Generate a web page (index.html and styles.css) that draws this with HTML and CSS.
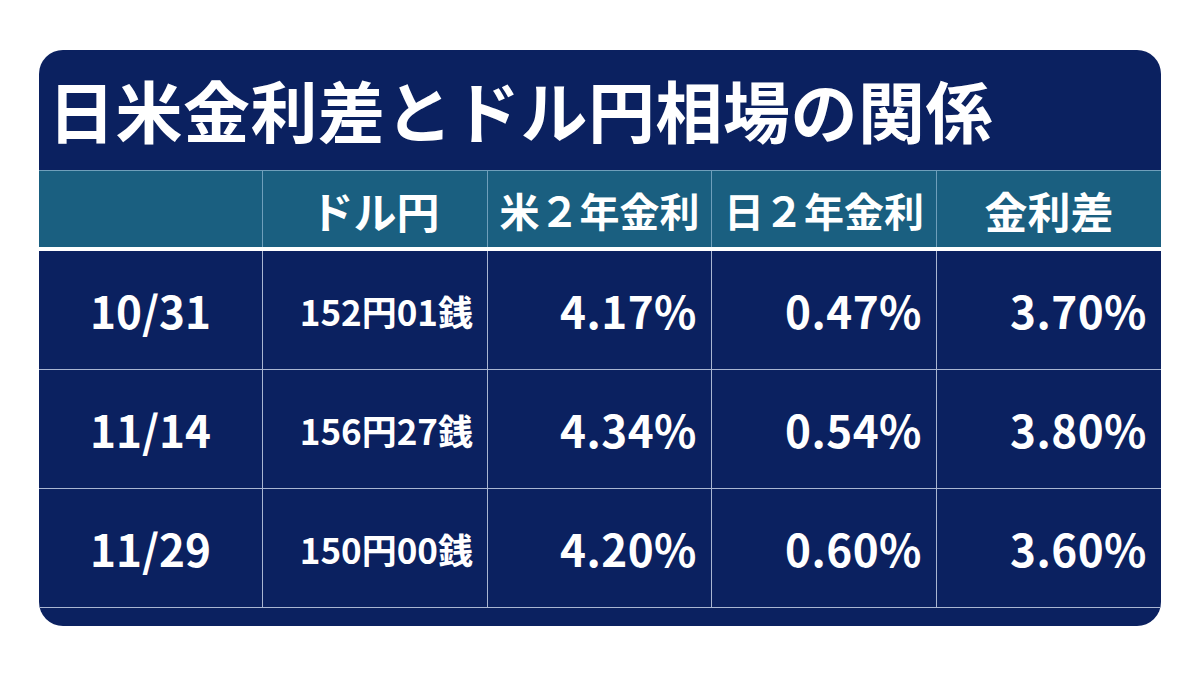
FILE: index.html
```html
<!DOCTYPE html>
<html lang="ja">
<head>
<meta charset="utf-8">
<title>日米金利差とドル円相場の関係</title>
<link rel="stylesheet" href="styles.css">
</head>
<body>
<div class="card">
  <h1 class="title">日米金利差とドル円相場の関係</h1>
  <div class="table">
    <div class="row head">
      <div class="cell"></div>
      <div class="cell wide">ドル円</div>
      <div class="cell">米２年金利</div>
      <div class="cell">日２年金利</div>
      <div class="cell wide">金利差</div>
    </div>
    <div class="sep"></div>
    <div class="row body">
      <div class="cell date">10/31</div>
      <div class="cell yen">152円01銭</div>
      <div class="cell pct">4.17%</div>
      <div class="cell pct">0.47%</div>
      <div class="cell pct">3.70%</div>
    </div>
    <div class="row body">
      <div class="cell date">11/14</div>
      <div class="cell yen">156円27銭</div>
      <div class="cell pct">4.34%</div>
      <div class="cell pct">0.54%</div>
      <div class="cell pct">3.80%</div>
    </div>
    <div class="row body">
      <div class="cell date">11/29</div>
      <div class="cell yen">150円00銭</div>
      <div class="cell pct">4.20%</div>
      <div class="cell pct">0.60%</div>
      <div class="cell pct">3.60%</div>
    </div>
  </div>
</div>
</body>
</html>
```
FILE: styles.css
```css
html, body {
  margin: 0;
  padding: 0;
  background: #ffffff;
}
body {
  width: 1200px;
  height: 675px;
  overflow: hidden;
  font-family: "Noto Sans CJK JP", "Noto Sans", sans-serif;
  color: #ffffff;
}
.card {
  margin: 50px 0 0 39px;
  width: 1122px;
  height: 576px;
  background: #0b2160;
  border-radius: 24px;
  overflow: hidden;
  display: flex;
  flex-direction: column;
}
.title {
  margin: 0;
  height: 120px;
  box-sizing: border-box;
  display: flex;
  align-items: center;
  padding-left: 9px;
  padding-bottom: 4px;
  font-size: 67px;
  font-weight: 700;
  line-height: 1;
  letter-spacing: 0.5px;
}
.table {
  display: flex;
  flex-direction: column;
}
.row {
  display: grid;
  grid-template-columns: 224px 225px 224px 225px 224px;
}
.head {
  background: #1a5f80;
  border-top: 1px solid #6f9fbb;
  height: 76px;
}
.head .cell {
  display: flex;
  align-items: center;
  justify-content: center;
  font-size: 40px;
  font-weight: 700;
  border-right: 1px solid #6f9fbb;
  padding-top: 2px;
}
.head .wide {
  font-size: 43px;
}
.sep {
  height: 4px;
  background: #ffffff;
}
.body {
  height: 118px;
  border-bottom: 1px solid #aab6d2;
}
.body .cell {
  display: flex;
  align-items: center;
  font-weight: 700;
  border-right: 1px solid #aab6d2;
}
.head .cell:last-child,
.body .cell:last-child {
  border-right: none;
}
.date {
  justify-content: center;
  font-size: 44px;
}
.yen {
  justify-content: flex-end;
  padding-right: 14px;
  font-size: 35px;
}
.pct {
  justify-content: flex-end;
  padding-right: 14px;
  font-size: 44px;
  letter-spacing: 0.5px;
}
```
